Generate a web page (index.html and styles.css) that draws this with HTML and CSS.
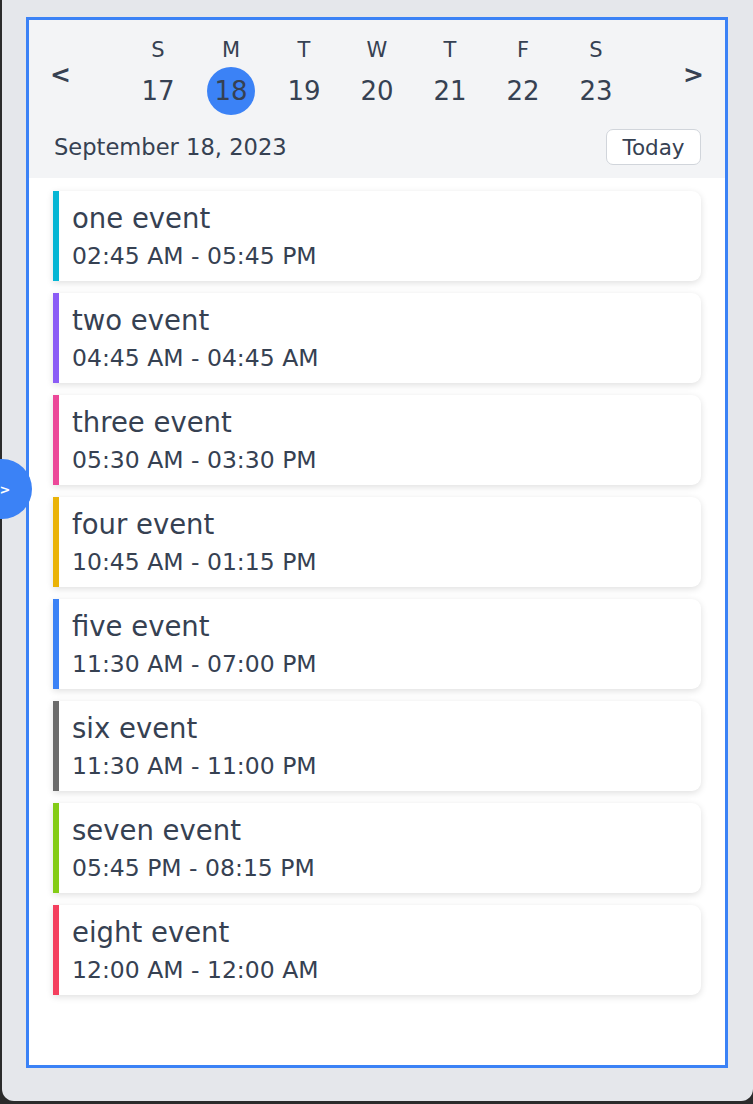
FILE: index.html
```html
<!DOCTYPE html>
<html>
<head>
<meta charset="utf-8">
<link rel="stylesheet" href="styles.css">
</head>
<body>
<div class="window">
  <div class="calendar">
    <div class="header">
      <div class="week">
        <button class="nav nav-prev">&lt;</button>
        <div class="day"><span class="dow">S</span><span class="num">17</span></div>
        <div class="day"><span class="dow">M</span><span class="num selected">18</span></div>
        <div class="day"><span class="dow">T</span><span class="num">19</span></div>
        <div class="day"><span class="dow">W</span><span class="num">20</span></div>
        <div class="day"><span class="dow">T</span><span class="num">21</span></div>
        <div class="day"><span class="dow">F</span><span class="num">22</span></div>
        <div class="day"><span class="dow">S</span><span class="num">23</span></div>
        <button class="nav nav-next">&gt;</button>
      </div>
      <div class="dateline">
        <span class="date">September 18, 2023</span>
        <button class="today">Today</button>
      </div>
    </div>
    <div class="events">
      <div class="event c-cyan"><div class="title">one event</div><div class="time">02:45 AM - 05:45 PM</div></div>
      <div class="event c-purple"><div class="title">two event</div><div class="time">04:45 AM - 04:45 AM</div></div>
      <div class="event c-pink"><div class="title">three event</div><div class="time">05:30 AM - 03:30 PM</div></div>
      <div class="event c-amber"><div class="title">four event</div><div class="time">10:45 AM - 01:15 PM</div></div>
      <div class="event c-blue"><div class="title">five event</div><div class="time">11:30 AM - 07:00 PM</div></div>
      <div class="event c-gray"><div class="title">six event</div><div class="time">11:30 AM - 11:00 PM</div></div>
      <div class="event c-lime"><div class="title">seven event</div><div class="time">05:45 PM - 08:15 PM</div></div>
      <div class="event c-rose"><div class="title">eight event</div><div class="time">12:00 AM - 12:00 AM</div></div>
    </div>
  </div>
</div>
<button class="toggle">&gt;</button>
</body>
</html>
```
FILE: styles.css
```css
* { box-sizing: border-box; }
html, body { margin: 0; padding: 0; }
body {
  background: #2b2b2b;
  width: 753px;
  height: 1104px;
  overflow: hidden;
  position: relative;
  font-family: "DejaVu Sans", "Open Sans", sans-serif;
  color: #364152;
}
.window {
  margin-left: 2px;
  height: 1101px;
  background: #e5e7eb;
  border-radius: 0 0 12px 12px;
  padding: 17px 0 0 24px;
}
.calendar {
  width: 702px;
  height: 1051px;
  border: 3px solid #3b82f6;
  background: #fff;
}
.header {
  background: #f3f4f6;
  height: 158px;
  padding-top: 15px;
}
.week {
  display: grid;
  grid-template-columns: 1fr repeat(7, 73px) 1fr;
  align-items: center;
}
.nav {
  background: none;
  border: none;
  font-family: inherit;
  font-weight: 700;
  font-size: 25px;
  line-height: 30px;
  color: #364152;
  padding: 0;
  margin-top: 0;
}
.nav-prev { justify-self: start; margin-left: 21px; }
.nav-next { justify-self: end; margin-right: 21px; }
.day {
  display: flex;
  flex-direction: column;
  align-items: center;
}
.dow {
  font-size: 21px;
  line-height: 30px;
}
.num {
  font-size: 26px;
  width: 48px;
  height: 48px;
  line-height: 48px;
  text-align: center;
  border-radius: 50%;
  margin-top: 2px;
}
.num.selected { background: #3b82f6; }
.dateline {
  display: flex;
  justify-content: space-between;
  align-items: center;
  padding: 14px 24px 0 25px;
}
.date { font-size: 22.6px; }
.today {
  font-family: inherit;
  font-size: 21.5px;
  color: #364152;
  background: #fff;
  border: 1px solid #d1d5db;
  border-radius: 7px;
  height: 36px;
  width: 95px;
  padding: 0;
}
.events {
  display: flex;
  flex-direction: column;
  gap: 12px;
  padding: 13px 24px 0 24px;
}
.event {
  height: 90px;
  background: #fff;
  border-left: 6px solid;
  border-radius: 0 9px 9px 0;
  box-shadow: 0 2px 7px rgba(0,0,0,0.13);
  padding: 9px 13px 0;
}
.title { font-size: 27.5px; line-height: 36px; }
.time { font-size: 23.5px; line-height: 41px; }
.c-cyan { border-color: #06b6d4; }
.c-purple { border-color: #8b5cf6; }
.c-pink { border-color: #ec4899; }
.c-amber { border-color: #eab308; }
.c-blue { border-color: #3b82f6; }
.c-gray { border-color: #6b6b6b; }
.c-lime { border-color: #84cc16; }
.c-rose { border-color: #f43f5e; }
.toggle {
  position: absolute;
  left: -28px;
  top: 459px;
  width: 60px;
  height: 60px;
  border-radius: 50%;
  background: #3b82f6;
  border: none;
  color: #fff;
  font-family: inherit;
  font-weight: 700;
  font-size: 13px;
  padding: 0 0 0 6px;
  text-align: center;
}
```
